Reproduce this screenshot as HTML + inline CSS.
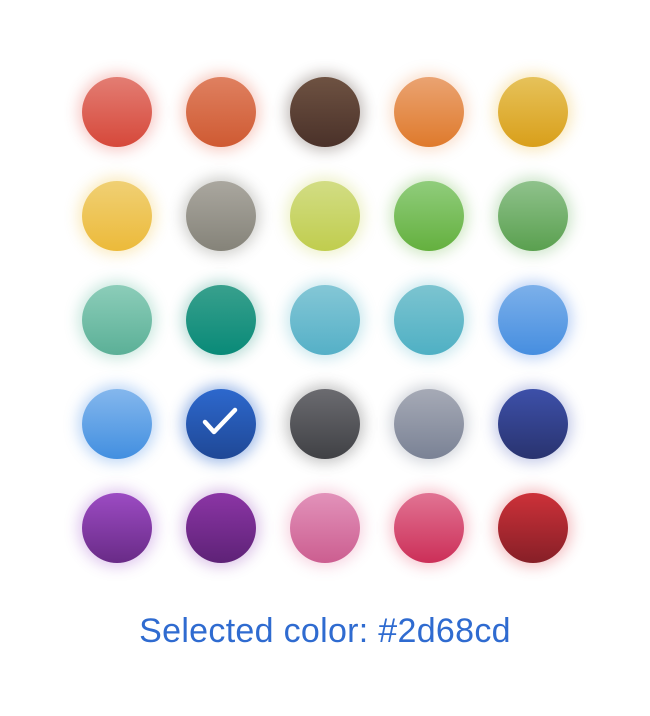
<!DOCTYPE html>
<html><head><style>
html,body{margin:0;padding:0;background:#fff;width:650px;height:716px;overflow:hidden}
.c{position:absolute;width:70px;height:70px;border-radius:50%}
.t{position:absolute;left:0;width:650px;top:611px;text-align:center;font:34px "Liberation Sans",sans-serif;letter-spacing:0.3px;color:#2f6bd0;line-height:40px}
</style></head><body>
<div id="g"></div>
<div class="t">Selected color: #2d68cd</div>
<script>
var cols=[
["#e37d73","#d6483a","rgba(230,80,70,.3)"],["#df8060","#cf5a32","rgba(230,90,60,.3)"],["#6e5242","#4a3129","rgba(60,40,30,.3)"],["#eaa372","#df7a2c","rgba(235,130,60,.25)"],["#e6c25a","#d99f1a","rgba(235,180,40,.3)"],
["#f0d074","#ecba3a","rgba(240,190,50,.3)"],["#aaa79f","#858379","rgba(100,100,90,.3)"],["#d2dd84","#c0cd4e","rgba(200,210,80,.3)"],["#90cd7c","#64b03e","rgba(100,180,60,.3)"],["#8fc28c","#5aa04f","rgba(90,170,80,.3)"],
["#8ccdb9","#5bb097","rgba(80,180,150,.3)"],["#38a08d","#098a78","rgba(20,140,120,.3)"],["#84c7d6","#55b0c7","rgba(80,180,200,.3)"],["#7cc4d0","#4fb0c4","rgba(80,180,200,.3)"],["#7cb0ea","#468ee0","rgba(70,130,230,.35)"],
["#84b7ed","#428fe0","rgba(70,140,230,.35)"],["#2d68cd","#1f4896","rgba(45,104,205,.45)"],["#6b6b70","#404145","rgba(60,60,60,.3)"],["#a6aab6","#7a8295","rgba(110,120,140,.3)"],["#3d50a9","#29336f","rgba(60,80,180,.3)"],
["#9c4bc3","#692b87","rgba(150,70,200,.3)"],["#8b35a5","#5e2277","rgba(140,60,180,.3)"],["#e292ba","#cc5e90","rgba(230,120,160,.3)"],["#e17393","#cc2f58","rgba(230,70,100,.3)"],["#cd3139","#871f27","rgba(220,50,60,.3)"]];
var h="";
cols.forEach(function(c,i){var x=82+104*(i%5),y=77+104*Math.floor(i/5);
h+='<div class="c" style="left:'+x+'px;top:'+y+'px;background:linear-gradient('+c[0]+','+c[1]+');box-shadow:0 0 14px 4px '+c[2]+'">'+(i==16?'<svg width="70" height="70" viewBox="0 0 70 70"><path d="M19 33 L28 43 L49 21" fill="none" stroke="#fff" stroke-width="4.5" stroke-linecap="round" stroke-linejoin="round"/></svg>':'')+'</div>';});
document.getElementById("g").innerHTML=h;
</script>
</body></html>
